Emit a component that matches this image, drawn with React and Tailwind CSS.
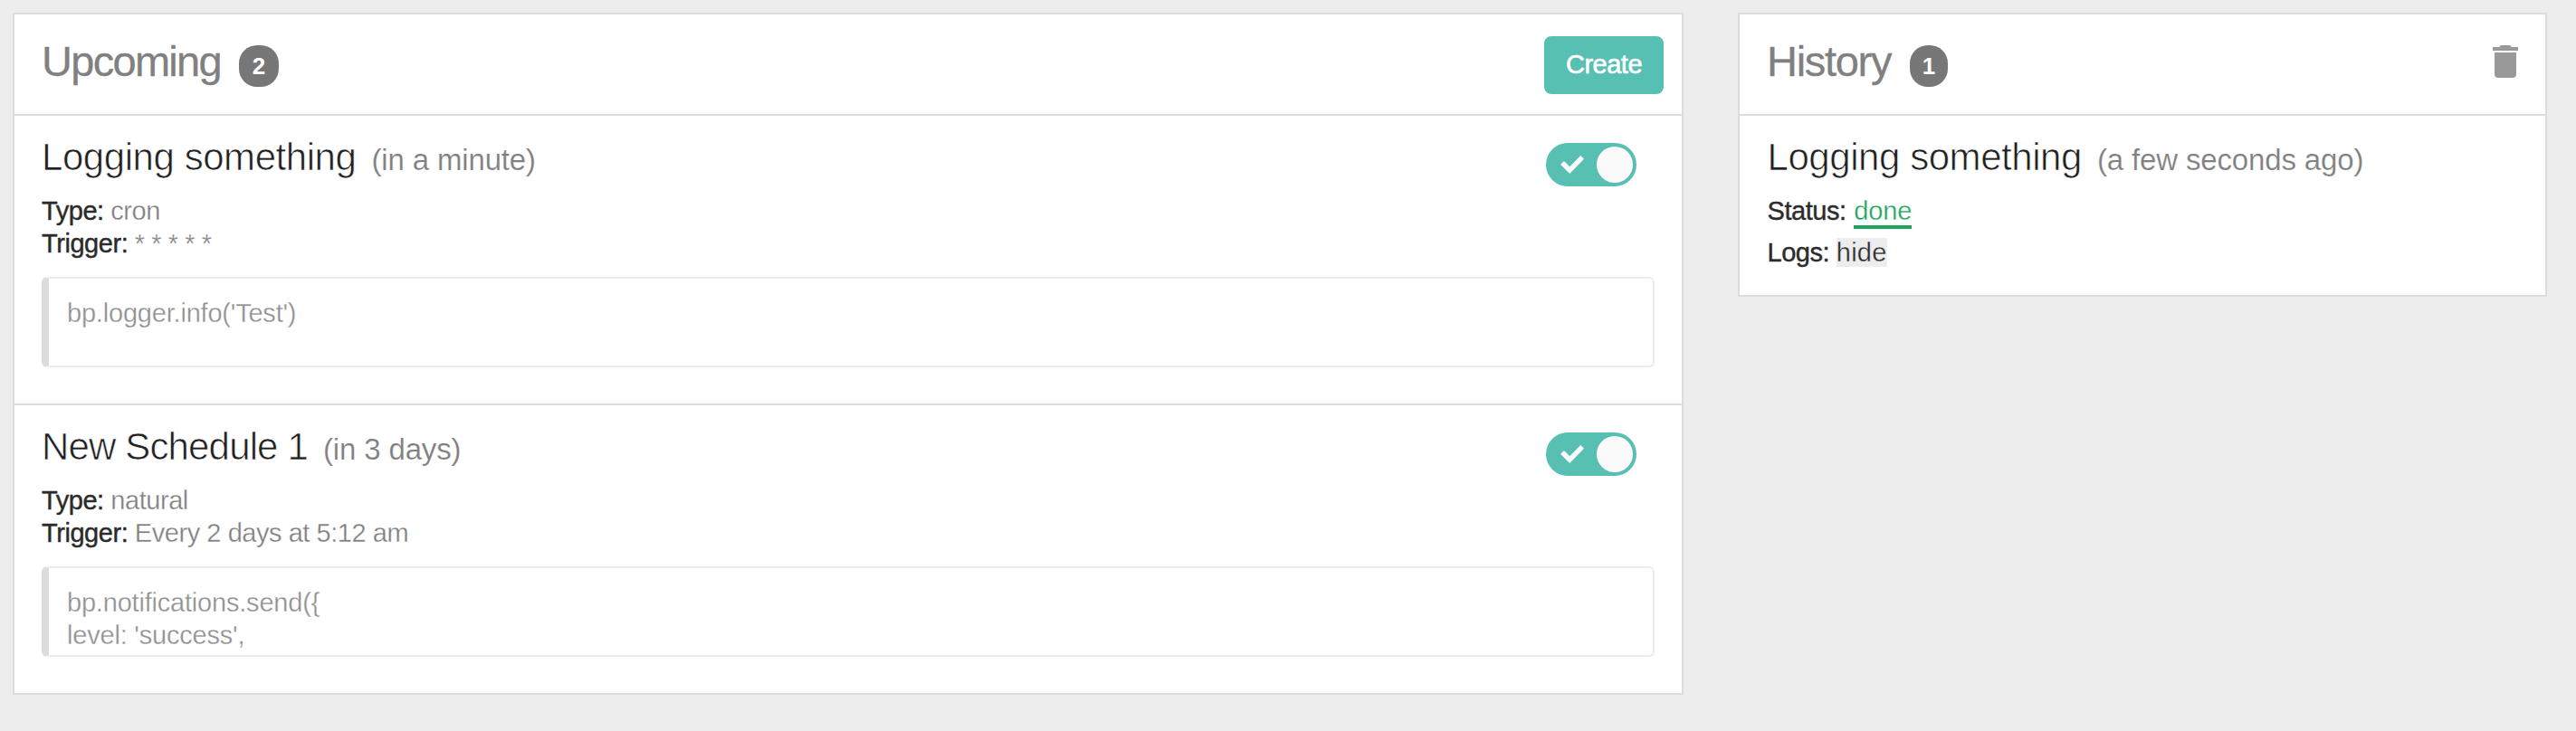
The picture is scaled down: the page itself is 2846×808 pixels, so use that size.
const upcoming = [
  {
    name: 'Logging something',
    nameClass: 'tracking-[-0.44px]',
    when: '(in a minute)',
    type: 'cron',
    trigger: '* * * * *',
    code: "bp.logger.info('Test')",
  },
  {
    name: 'New Schedule 1',
    nameClass: 'tracking-[-0.85px]',
    when: '(in 3 days)',
    type: 'natural',
    trigger: 'Every 2 days at 5:12 am',
    code: "bp.notifications.send({\nlevel: 'success',",
  },
]

function PanelHeader({ title, titleClass, count, badgeClass, children }) {
  return (
    <header className="flex h-[112px] items-start border-b-2 border-[#dcdcdc] pl-[30px]">
      <h2
        className={`mt-[26px] text-[47px] leading-[52px] text-[#808080] [-webkit-text-stroke:0.3px_#808080] ${titleClass}`}
      >
        {title}
      </h2>
      <span
        className={`mt-[34px] flex h-[46px] items-center justify-center rounded-[20px] bg-[#777777] text-[26px] leading-none font-bold text-white ${badgeClass}`}
      >
        {count}
      </span>
      <div className="ml-auto">{children}</div>
    </header>
  )
}

function Title({ name, nameClass, when }) {
  return (
    <h3 className="flex items-baseline gap-[17px] leading-[44px]">
      <span className={`text-[42px] text-[#202020] [-webkit-text-stroke:0.7px_white] ${nameClass}`}>{name}</span>
      <span className="text-[33px] tracking-[-0.15px] text-[#808080] [-webkit-text-stroke:0.2px_white]">{when}</span>
    </h3>
  )
}

function Label({ children }) {
  return <span className="text-[#2b2b2b] [-webkit-text-stroke:0.4px_#2b2b2b]">{children}</span>
}

function Toggle() {
  return (
    <button className="flex h-12 w-[100px] items-center justify-between rounded-full bg-[#57c0b2] pr-1 pl-4">
      <svg className="h-5 w-[26px]" viewBox="0 0 26 20" fill="#fff">
        <path d="M22.3 0 26 3.8 10.2 20 0 9.8 4 6 10.2 12.2Z" />
      </svg>
      <span className="size-10 rounded-full bg-[#fafafa]" />
    </button>
  )
}

function Schedule({ item }) {
  return (
    <article className="border-b-2 border-[#dcdcdc] pt-6 pr-[30px] pb-10 pl-[30px] last:border-b-0">
      <div className="flex h-[134px] items-start justify-between">
        <div>
          <Title name={item.name} nameClass={item.nameClass} when={item.when} />
          <div className="mt-4 text-[29px] leading-9 tracking-[-0.45px] text-[#808080]">
            <div>
              <Label>Type:</Label> <span className="[-webkit-text-stroke:0.3px_white]">{item.type}</span>
            </div>
            <div>
              <Label>Trigger:</Label> <span className="[-webkit-text-stroke:0.3px_white]">{item.trigger}</span>
            </div>
          </div>
        </div>
        <div className="mt-[6px] mr-5">
          <Toggle />
        </div>
      </div>
      <pre className="mt-5 h-[100px] overflow-hidden rounded-md border-2 border-l-8 border-[#ebebeb] border-l-[#dcdcdc] pt-5 pl-5 font-['Liberation_Sans',Arial,sans-serif] text-[29px] leading-9 tracking-[-0.2px] text-[#909090] [-webkit-text-stroke:0.3px_white]">
        {item.code}
      </pre>
    </article>
  )
}

export default function App() {
  return (
    <main className="flex h-[808px] w-[2846px] items-start bg-[#ededed] pt-[14px] pl-[14px] font-['Liberation_Sans',Arial,sans-serif]">
      <section className="w-[1846px] border-2 border-[#dcdcdc] bg-white">
        <PanelHeader title="Upcoming" titleClass="w-[218px] tracking-[-1.7px]" count="2" badgeClass="w-11">
          <button className="mt-6 mr-5 h-16 w-[132px] rounded-lg bg-[#57c0b2] text-[29px] tracking-[-0.5px] text-white [-webkit-text-stroke:0.6px_white]">
            Create
          </button>
        </PanelHeader>
        {upcoming.map((item) => (
          <Schedule key={item.name} item={item} />
        ))}
      </section>

      <section className="ml-[60px] h-[314px] w-[894px] border-2 border-[#dcdcdc] bg-white">
        <PanelHeader title="History" titleClass="w-[158px] tracking-[-1.3px]" count="1" badgeClass="w-[42px]">
          <svg className="mt-[34px] mr-[30px] h-9 w-7" viewBox="0 0 28 36" fill="#999">
            <path d="M0 2H7L9 0H19L21 2H28V6H0Z" />
            <path d="M2 8H26V32a4 4 0 0 1-4 4H6a4 4 0 0 1-4-4Z" />
          </svg>
        </PanelHeader>
        <article className="pt-6 pl-[30.5px]">
          <Title name="Logging something" nameClass="tracking-[-0.44px]" when="(a few seconds ago)" />
          <div className="mt-4 text-[29px] leading-9 tracking-[-0.45px]">
            <div className="flex h-[46px] items-start gap-[8.5px]">
              <Label>Status:</Label>
              <span className="h-[38px] border-b-4 border-[#1ea55c] tracking-[-0.1px] text-[#1ea55c] [-webkit-text-stroke:0.3px_white]">
                done
              </span>
            </div>
            <div className="flex items-start gap-[7.5px]">
              <Label>Logs:</Label>
              <span className="mt-[2px] h-8 bg-[#ededed] leading-8 tracking-[0.3px] text-[#2b2b2b] [-webkit-text-stroke:0.3px_#ededed]">
                hide
              </span>
            </div>
          </div>
        </article>
      </section>
    </main>
  )
}
